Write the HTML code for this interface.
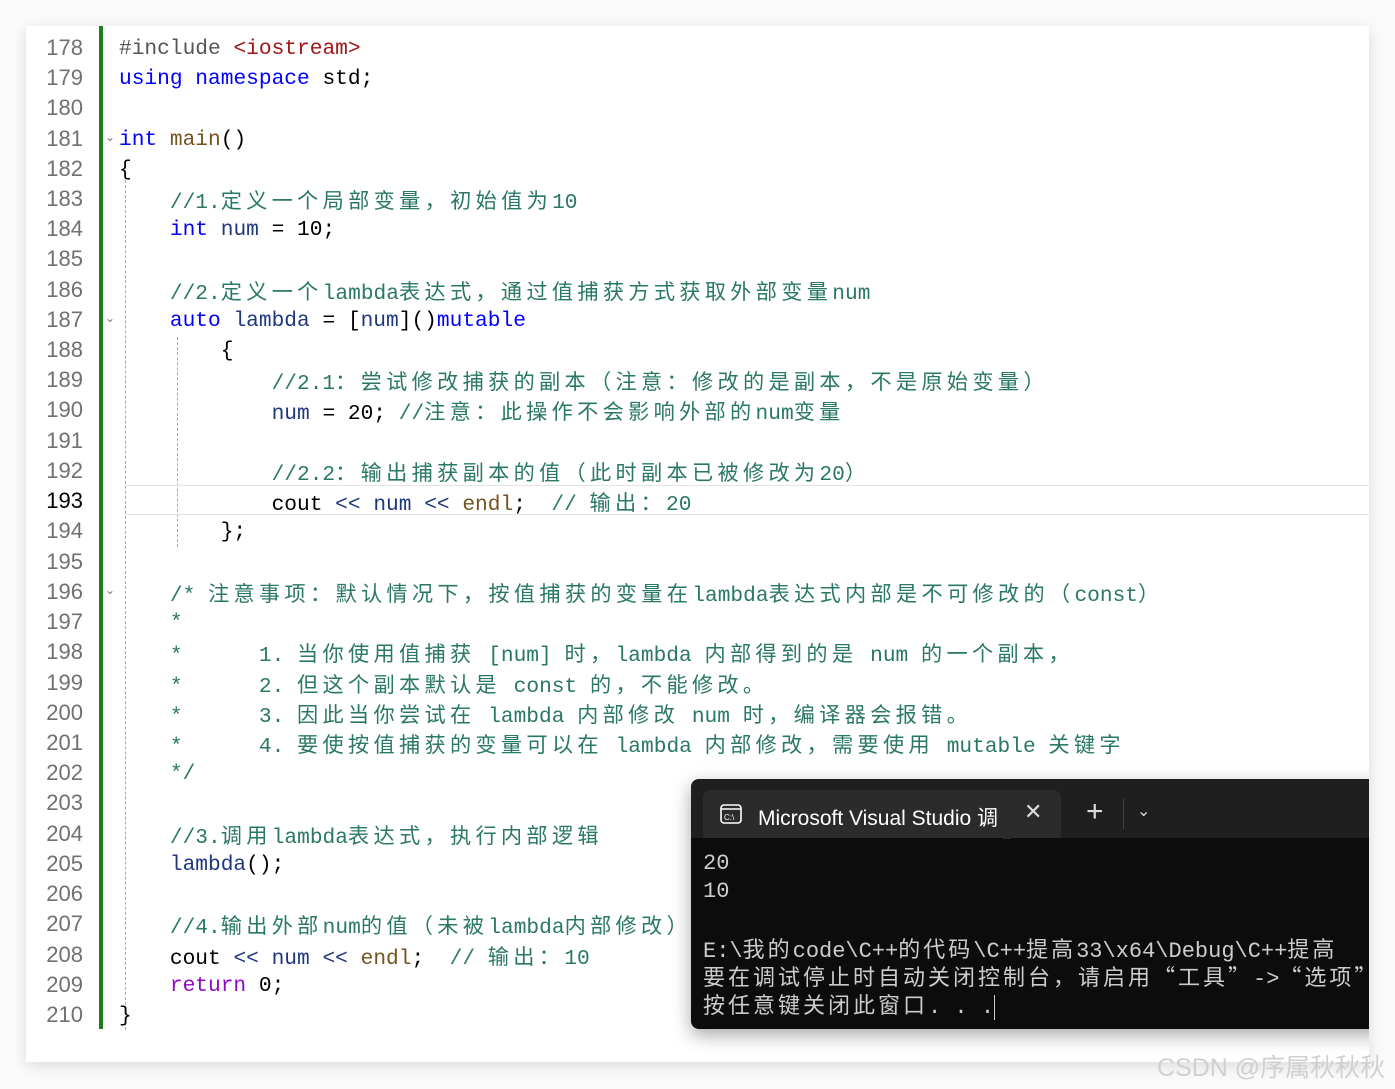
<!DOCTYPE html>
<html><head><meta charset="utf-8"><style>
html,body{margin:0;padding:0;background:#fafafa;width:1395px;height:1089px;overflow:hidden;position:relative}
.card{position:absolute;left:26px;top:26px;width:1343px;height:1036px;background:#fff;box-shadow:0 4px 14px rgba(0,0,0,.12);overflow:hidden}
.ln{position:absolute;left:0;width:57px;text-align:right;font:22px "Liberation Sans",sans-serif;color:#707070;height:30px;line-height:30px}
.cd{position:absolute;left:93px;white-space:pre;font:21.2px "Liberation Mono","Noto Sans CJK SC",monospace;height:30px;line-height:32px;color:#000}
.z{letter-spacing:4.3px;font-family:"Noto Sans CJK SC",sans-serif}
.k{color:#0000ff}.c{color:#2a7866}.v{color:#1f377f}.f{color:#74531f}.s{color:#a31515}.r{color:#8f08c4}.p{color:#555}
.bar{position:absolute;left:73px;top:0;width:4px;height:1003px;background:#1e7d1e}
.guide{position:absolute;border-left:1px dashed #a8a8a8;width:0}
.fold{position:absolute;left:79px;font:12px "DejaVu Sans",sans-serif;color:#777}
.term{position:absolute;left:665px;top:753px;width:700px;height:250px;background:#0c0c0c;border-radius:8px;box-shadow:0 6px 18px rgba(0,0,0,.35);overflow:hidden}
.tbar{position:absolute;left:0;top:0;width:100%;height:59px;background:#1f1f1f}
.tab{position:absolute;left:12px;top:11px;width:358px;height:48px;background:#2b2b2b;border-radius:8px 8px 0 0}
.tt{position:absolute;font:21px "Liberation Sans",sans-serif;color:#fff;white-space:nowrap}
.out{position:absolute;left:12px;top:71px;font:22px "Liberation Mono","Noto Sans CJK SC",monospace;color:#cccccc;white-space:pre}
.out div{height:28px;line-height:28px;overflow:visible}
.out .z{letter-spacing:3px}
.wm{position:absolute;left:1157px;top:1048px;font:25px "Liberation Sans","Noto Sans CJK SC",sans-serif;color:#d0d0d0;white-space:nowrap}
</style></head><body>
<div class="card">
<div class="bar"></div>
<div class="guide" style="left:99px;top:134px;height:870px"></div>
<div class="guide" style="left:151px;top:311px;height:210px"></div>
<div style="position:absolute;left:99px;top:459px;width:1250px;height:28px;border-top:1px solid #e4e4e4;border-bottom:1px solid #e4e4e4"></div>
<div class="fold" style="top:104px">⌄</div>
<div class="fold" style="top:285px">⌄</div>
<div class="fold" style="top:557px">⌄</div>

<div class="ln" style="top:7px">178</div><div class="cd" style="top:7px"><span class="p">#include</span> <span class="s">&lt;iostream&gt;</span></div>
<div class="ln" style="top:37px">179</div><div class="cd" style="top:37px"><span class="k">using</span> <span class="k">namespace</span> std;</div>
<div class="ln" style="top:67px">180</div>
<div class="ln" style="top:98px">181</div><div class="cd" style="top:98px"><span class="k">int</span> <span class="f">main</span>()</div>
<div class="ln" style="top:128px">182</div><div class="cd" style="top:128px">{</div>
<div class="ln" style="top:158px">183</div><div class="cd c" style="top:158px">    //1.<span class="z">定义一个局部变量，初始值为</span>10</div>
<div class="ln" style="top:188px">184</div><div class="cd" style="top:188px">    <span class="k">int</span> <span class="v">num</span> = 10;</div>
<div class="ln" style="top:218px">185</div>
<div class="ln" style="top:249px">186</div><div class="cd c" style="top:249px">    //2.<span class="z">定义一个</span>lambda<span class="z">表达式，通过值捕获方式获取外部变量</span>num</div>
<div class="ln" style="top:279px">187</div><div class="cd" style="top:279px">    <span class="k">auto</span> <span class="v">lambda</span> = [<span class="v">num</span>]()<span class="k">mutable</span></div>
<div class="ln" style="top:309px">188</div><div class="cd" style="top:309px">        {</div>
<div class="ln" style="top:339px">189</div><div class="cd c" style="top:339px">            //2.1<span class="z">：尝试修改捕获的副本（注意：修改的是副本，不是原始变量）</span></div>
<div class="ln" style="top:369px">190</div><div class="cd" style="top:369px">            <span class="v">num</span> = 20; <span class="c">//<span class="z">注意：此操作不会影响外部的</span>num<span class="z">变量</span></span></div>
<div class="ln" style="top:400px">191</div>
<div class="ln" style="top:430px">192</div><div class="cd c" style="top:430px">            //2.2<span class="z">：输出捕获副本的值（此时副本已被修改为</span>20<span class="z">）</span></div>
<div class="ln" style="top:460px;color:#000">193</div><div class="cd" style="top:460px">            cout <span class="v">&lt;&lt;</span> <span class="v">num</span> <span class="v">&lt;&lt;</span> <span class="f">endl</span>;  <span class="c">// <span class="z">输出：</span>20</span></div>
<div class="ln" style="top:490px">194</div><div class="cd" style="top:490px">        };</div>
<div class="ln" style="top:521px">195</div>
<div class="ln" style="top:551px">196</div><div class="cd c" style="top:551px">    /* <span class="z">注意事项：默认情况下，按值捕获的变量在</span>lambda<span class="z">表达式内部是不可修改的（</span>const<span class="z">）</span></div>
<div class="ln" style="top:581px">197</div><div class="cd c" style="top:581px">    *</div>
<div class="ln" style="top:611px">198</div><div class="cd c" style="top:611px">    *      1. <span class="z">当你使用值捕获</span> [num] <span class="z">时，</span>lambda <span class="z">内部得到的是</span> num <span class="z">的一个副本，</span></div>
<div class="ln" style="top:642px">199</div><div class="cd c" style="top:642px">    *      2. <span class="z">但这个副本默认是</span> const <span class="z">的，不能修改。</span></div>
<div class="ln" style="top:672px">200</div><div class="cd c" style="top:672px">    *      3. <span class="z">因此当你尝试在</span> lambda <span class="z">内部修改</span> num <span class="z">时，编译器会报错。</span></div>
<div class="ln" style="top:702px">201</div><div class="cd c" style="top:702px">    *      4. <span class="z">要使按值捕获的变量可以在</span> lambda <span class="z">内部修改，需要使用</span> mutable <span class="z">关键字</span></div>
<div class="ln" style="top:732px">202</div><div class="cd c" style="top:732px">    */</div>
<div class="ln" style="top:762px">203</div>
<div class="ln" style="top:793px">204</div><div class="cd c" style="top:793px">    //3.<span class="z">调用</span>lambda<span class="z">表达式，执行内部逻辑</span></div>
<div class="ln" style="top:823px">205</div><div class="cd" style="top:823px">    <span class="v">lambda</span>();</div>
<div class="ln" style="top:853px">206</div>
<div class="ln" style="top:883px">207</div><div class="cd c" style="top:883px">    //4.<span class="z">输出外部</span>num<span class="z">的值（未被</span>lambda<span class="z">内部修改）</span></div>
<div class="ln" style="top:914px">208</div><div class="cd" style="top:914px">    cout <span class="v">&lt;&lt;</span> <span class="v">num</span> <span class="v">&lt;&lt;</span> <span class="f">endl</span>;  <span class="c">// <span class="z">输出：</span>10</span></div>
<div class="ln" style="top:944px">209</div><div class="cd" style="top:944px">    <span class="r">return</span> 0;</div>
<div class="ln" style="top:974px">210</div><div class="cd" style="top:974px">}</div>

<div class="term">
<div class="tbar"></div>
<div class="tab"></div>
<svg style="position:absolute;left:29px;top:25px" width="22" height="20" viewBox="0 0 22 20"><rect x="1" y="1" width="20" height="18" rx="3" fill="none" stroke="#fff" stroke-width="1.6"/><line x1="1" y1="5" x2="21" y2="5" stroke="#fff" stroke-width="1.4"/><text x="4" y="16" font-size="8" fill="#fff" font-family="Liberation Sans">C:\</text></svg>
<div class="tt" style="left:67px;top:23px">Microsoft Visual Studio 调</div>
<div style="position:absolute;left:312px;top:12px;width:8px;height:48px;background:#2b2b2b"></div>
<div class="tt" style="left:333px;top:20px;font-size:22px;color:#ddd">✕</div>
<div class="tt" style="left:395px;top:16px;font-size:30px;color:#ddd">+</div>
<div style="position:absolute;left:432px;top:20px;width:1px;height:30px;background:#444"></div>
<div class="tt" style="left:446px;top:22px;font-size:16px;color:#ddd">⌄</div>
<div class="out"><div>20</div><div>10</div><div></div><div>E:\<span class="z">我的</span>code\C++<span class="z">的代码</span>\C++<span class="z">提高</span>33\x64\Debug\C++<span class="z">提高</span></div><div><span class="z">要在调试停止时自动关闭控制台，请启用“工具”</span>-&gt;<span class="z">“选项”</span></div><div><span class="z">按任意键关闭此窗口</span>. . .<span style="border-left:1px solid #ccc"></span></div></div>
</div>
</div>
<div class="wm">CSDN @序属秋秋秋</div>
</body></html>
